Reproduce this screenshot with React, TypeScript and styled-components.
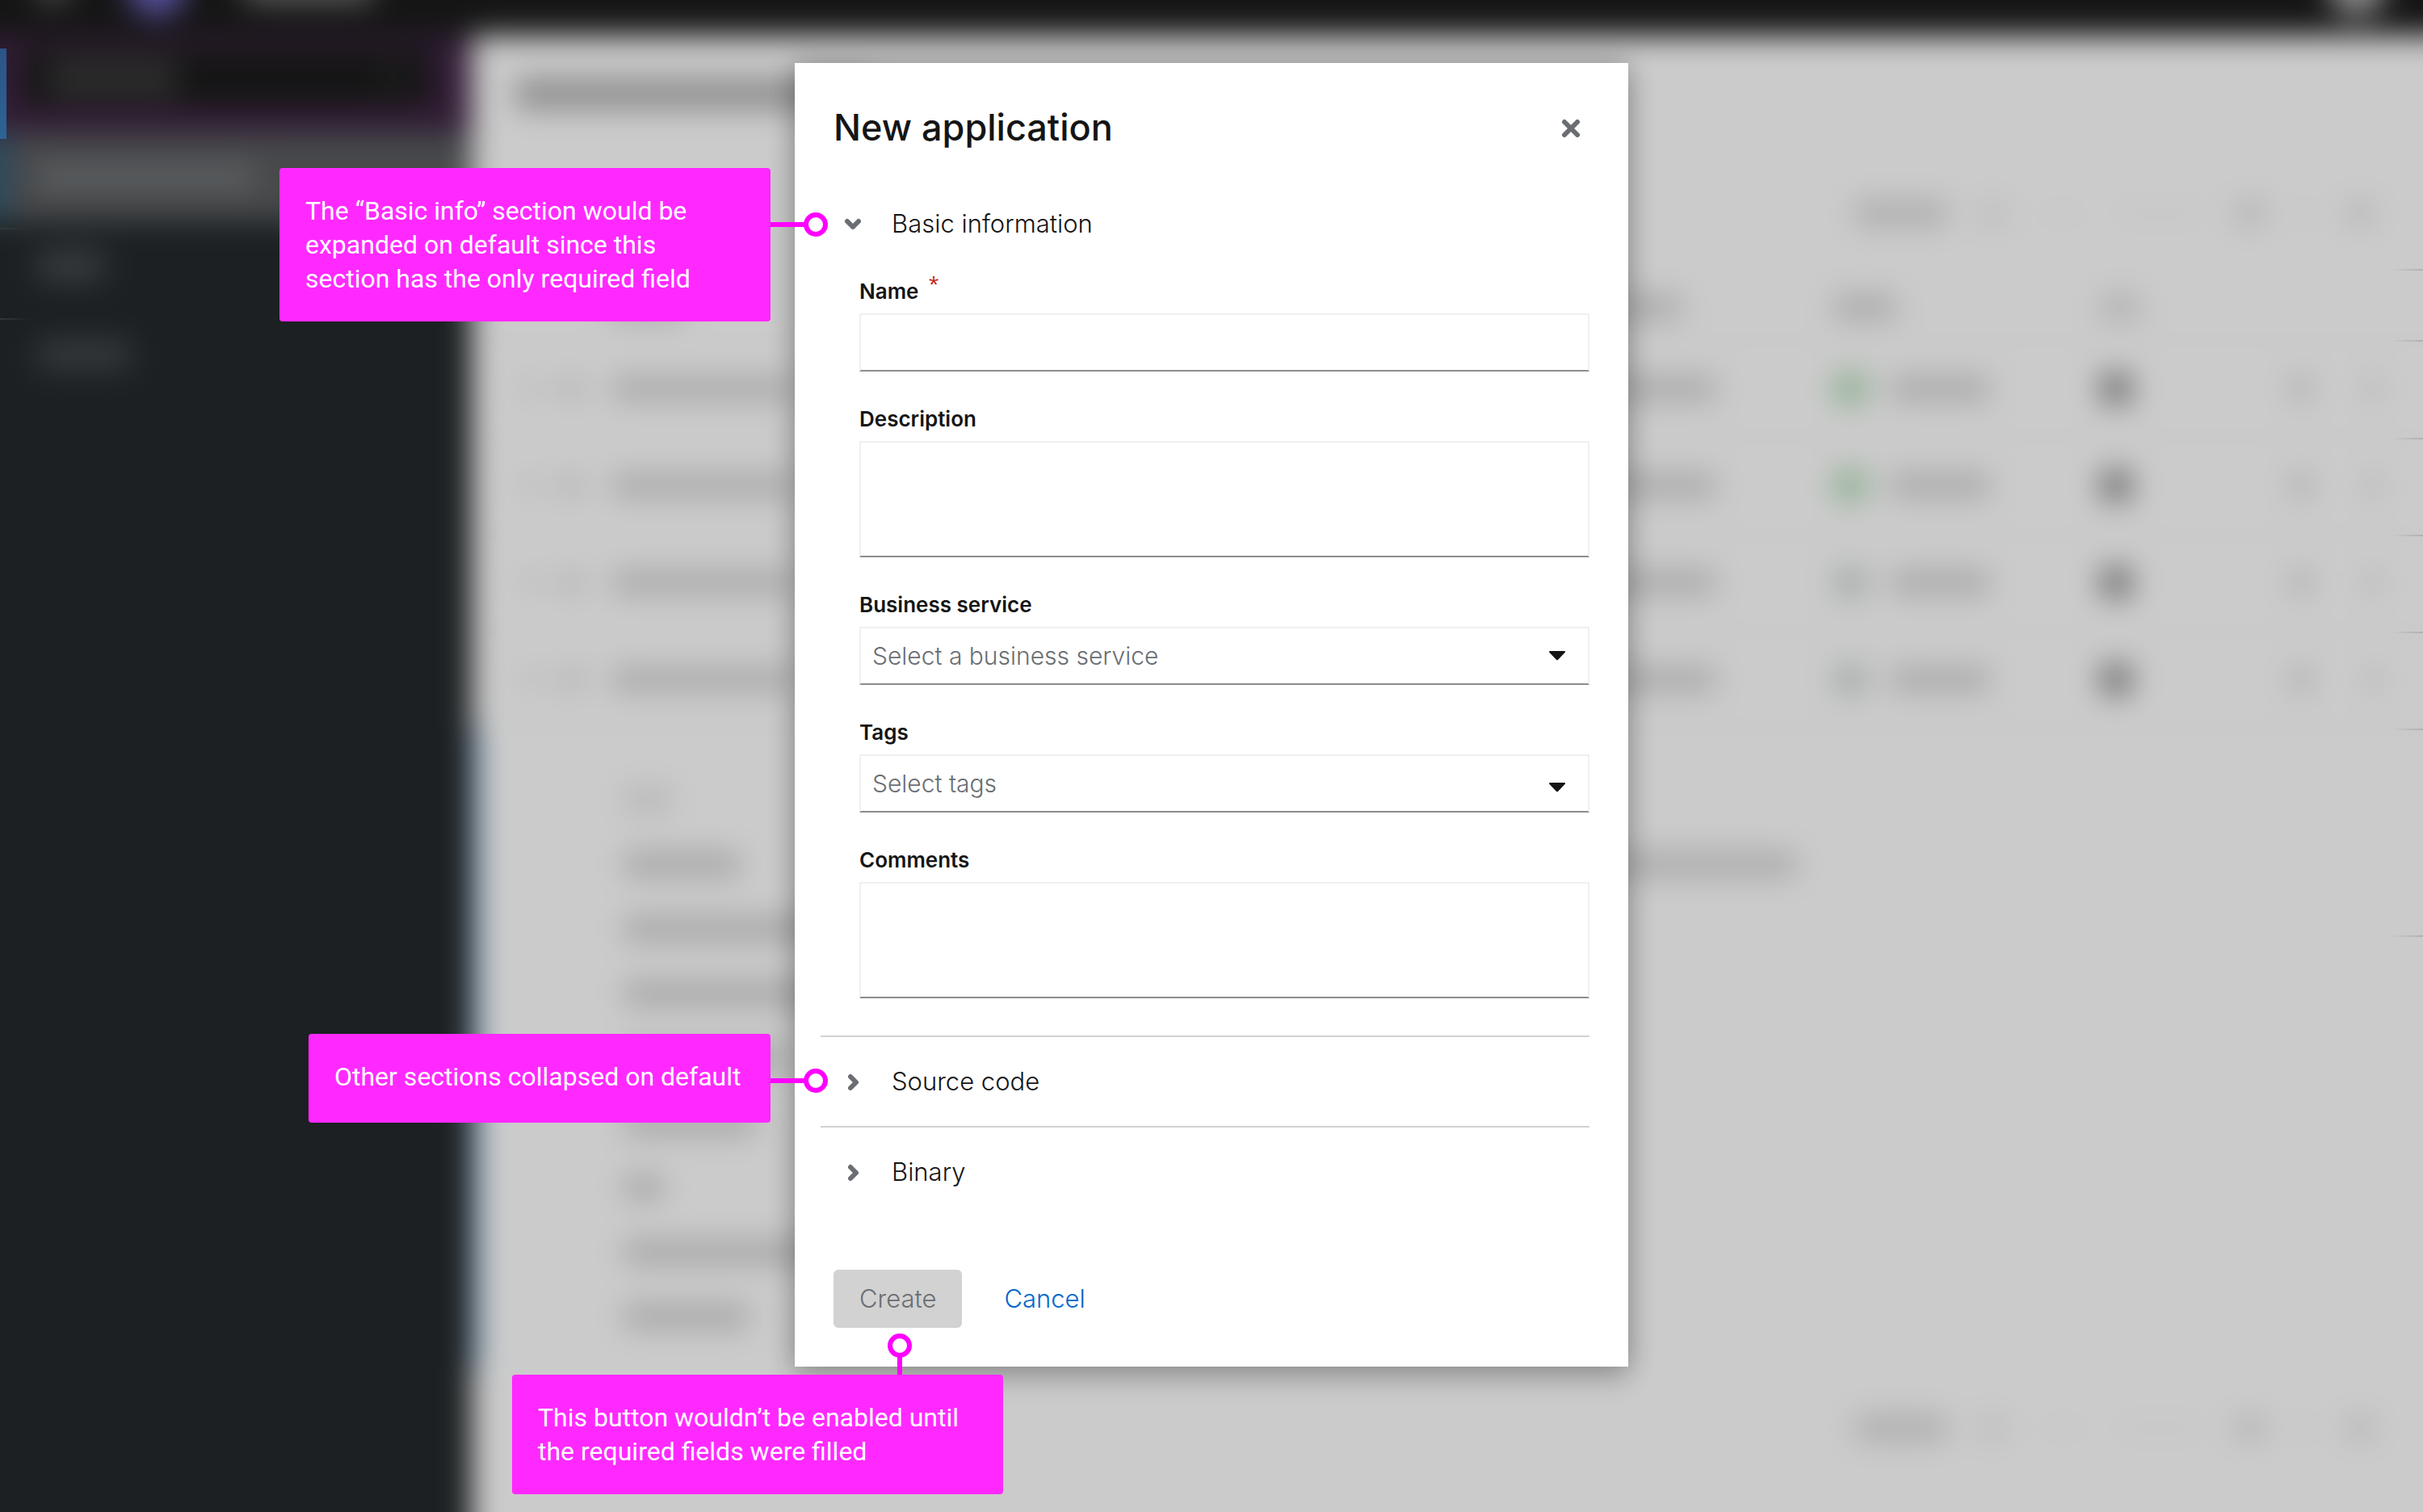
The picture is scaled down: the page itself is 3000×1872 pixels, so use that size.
import React from "react";
import styled, { createGlobalStyle, css } from "styled-components";

const bodyFont = `Inter, "Open Sans", sans-serif`;
const noteFont = `Roboto, "Open Sans", sans-serif`;

const color = {
  text: "#151515",
  muted: "#6a6e73",
  line: "#d2d2d2",
  fieldLine: "#f0f0f0",
  fieldBase: "#8a8d90",
  link: "#0066cc",
  required: "#c9190b",
  note: "#ff29ff",
  pin: "#ff00ff",
  page: "#cbcbcb",
  masthead: "#151515",
  sidebar: "#1c2022",
};

const GlobalStyle = createGlobalStyle`
  *, *::before, *::after { box-sizing: border-box; }
  body { margin: 0; background: ${color.page}; font-family: ${bodyFont}; color: ${color.text}; }
  button, input, select, textarea { font: inherit; color: inherit; }
`;

const Screen = styled.div`
  position: relative;
  min-height: 100vh;
  overflow: hidden;
`;

/* ---------- page behind the dialog ---------- */

const Backdrop = styled.div`
  position: absolute;
  inset: -104px -64px -64px;
  display: flex;
  flex-direction: column;
  background: ${color.page};
  filter: blur(18px);
`;

const Masthead = styled.div`
  flex: none;
  display: flex;
  align-items: center;
  gap: 72px;
  height: 148px;
  padding: 28px 110px 0;
  background: ${color.masthead};
`;

const Spacer = styled.div`
  flex: 1;
`;

const Disc = styled.div<{ $tone: string }>`
  width: 72px;
  height: 72px;
  border-radius: 50%;
  background: ${(p) => p.$tone};
`;

const Smudge = styled.div<{ $w: number; $h?: number; $tone?: string }>`
  flex: none;
  width: ${(p) => p.$w}px;
  height: ${(p) => p.$h ?? 32}px;
  border-radius: 8px;
  background: ${(p) => p.$tone ?? "#ababab"};
`;

const Shell = styled.div`
  flex: 1;
  display: flex;
  min-height: 0;
`;

const Sidebar = styled.div`
  flex: none;
  width: 648px;
  background: ${color.sidebar};
`;

const Perspective = styled.div`
  display: flex;
  height: 120px;
  padding: 16px 50px 32px 92px;
  background: #321d36;
`;

const PerspectiveBox = styled.div`
  flex: 1;
  display: flex;
  align-items: center;
  justify-content: space-between;
  padding: 0 32px;
  background: ${color.masthead};
`;

const NavItem = styled.div<{ $current?: boolean }>`
  display: flex;
  align-items: center;
  height: 110px;
  padding-left: 110px;
  ${(p) =>
    p.$current &&
    css`
      background: #47494b;
      border-left: 76px solid #2b4a5e;
      padding-left: 34px;
    `}
`;

const Main = styled.div`
  flex: 1;
  display: flex;
  flex-direction: column;
`;

const TitleRow = styled.div`
  display: flex;
  align-items: center;
  height: 144px;
  padding-left: 54px;
`;

const ToolbarRow = styled.div`
  display: flex;
  align-items: center;
  justify-content: flex-end;
  gap: 40px;
  height: 152px;
  padding-right: 124px;
`;

const TableRow = styled.div<{ $head?: boolean }>`
  display: grid;
  grid-template-columns: 44px 65px 1fr 270px 330px 235px 95px 134px;
  align-items: center;
  height: ${(p) => (p.$head ? 82 : 120)}px;
  padding-left: 64px;
  border-bottom: 2px solid #bebebe;
`;

const Pair = styled.div`
  display: flex;
  align-items: center;
  gap: 28px;
`;

const Expanded = styled.div`
  display: flex;
  height: 790px;
  padding: 72px 0 0 178px;
  border-left: 10px solid #6f9cc0;
`;

const DetailList = styled.div`
  flex: 1;
  display: flex;
  flex-direction: column;
  gap: 48px;
`;

const DetailValue = styled.div`
  width: 1064px;
  padding-top: 80px;
`;

const EdgeMark = styled.div<{ $side: "left" | "right"; $top: number }>`
  position: absolute;
  top: ${(p) => p.$top}px;
  ${(p) => p.$side}: 0;
  width: 40px;
  height: 2px;
  background: linear-gradient(
    to ${(p) => p.$side},
    transparent,
    ${(p) => (p.$side === "left" ? "#34383b" : "#b0b0b0")}
  );
`;

const EdgeBar = styled.div`
  position: absolute;
  top: 60px;
  left: 0;
  width: 8px;
  height: 112px;
  background: linear-gradient(#2c5488, #2d6396);
`;

const rows = ["#92b194", "#92b194", "#a9adad", "#a9adad"];
const details = [60, 145, 300, 300, 200, 165, 50, 300, 155];
const edgeLines = [333, 421, 542, 662, 782, 902, 1158];

function Pager() {
  return (
    <ToolbarRow>
      <Smudge $w={116} $tone="#aeaeae" />
      <Smudge $w={30} $tone="#bcbcbc" />
      <Smudge $w={60} $h={4} $tone="#bebebe" />
      <Smudge $w={106} $h={4} $tone="#b8b8b8" />
      <Smudge $w={36} $tone="#b4b4b4" />
      <Smudge $w={20} $h={8} $tone="#bcbcbc" />
      <Smudge $w={36} $tone="#b8b8b8" />
    </ToolbarRow>
  );
}

function PageBehind() {
  return (
    <Backdrop aria-hidden="true">
      <Masthead>
        <Smudge $w={40} $h={40} $tone="#4a4a4a" />
        <Disc $tone="#5752a0" />
        <Smudge $w={160} $h={40} $tone="#5c5c5c" />
        <Spacer />
        <Disc $tone="#8c8c8c" />
      </Masthead>
      <Shell>
        <Sidebar>
          <Perspective>
            <PerspectiveBox>
              <Smudge $w={160} $h={48} $tone="#2c2c2c" />
              <Smudge $w={32} $h={32} $tone="#1e1e1e" />
            </PerspectiveBox>
          </Perspective>
          <NavItem $current>
            <Smudge $w={270} $h={32} $tone="#5c5f61" />
          </NavItem>
          <NavItem>
            <Smudge $w={84} $h={40} $tone="#383b3d" />
          </NavItem>
          <NavItem>
            <Smudge $w={116} $h={40} $tone="#35383a" />
          </NavItem>
        </Sidebar>
        <Main>
          <TitleRow>
            <Smudge $w={440} $h={40} $tone="#909090" />
          </TitleRow>
          <Pager />
          <TableRow $head>
            <span />
            <span />
            <Smudge $w={90} />
            <Smudge $w={82} />
            <Smudge $w={78} />
            <Smudge $w={50} $tone="#b2b2b2" />
            <span />
            <span />
          </TableRow>
          {rows.map((tone, i) => (
            <TableRow key={i}>
              <Smudge $w={16} $tone="#b4b4b4" />
              <Smudge $w={30} $tone="#b4b4b4" />
              <Smudge $w={225} />
              <Smudge $w={125} />
              <Pair>
                <Smudge $w={42} $h={40} $tone={tone} />
                <Smudge $w={124} />
              </Pair>
              <Smudge $w={40} $h={40} $tone="#767676" />
              <Smudge $w={28} $tone="#b0b0b0" />
              <Smudge $w={16} $tone="#b0b0b0" />
            </TableRow>
          ))}
          <Expanded>
            <DetailList>
              {details.map((w, i) => (
                <Smudge key={i} $w={w} $tone={i === 0 ? "#b8b8b8" : "#a8a8a8"} />
              ))}
            </DetailList>
            <DetailValue>
              <Smudge $w={224} />
            </DetailValue>
          </Expanded>
          <Pager />
        </Main>
      </Shell>
    </Backdrop>
  );
}

/* ---------- dialog ---------- */

const ModalLayer = styled.div`
  position: relative;
  display: flex;
  justify-content: center;
  padding: 78px 0;
`;

const Dialog = styled.form`
  width: 1032px;
  max-width: 100%;
  padding: 48px;
  background: #fff;
  box-shadow: 0 16px 32px rgba(3, 3, 3, 0.16), 0 0 32px rgba(3, 3, 3, 0.24);
`;

const DialogHeader = styled.header`
  display: flex;
  align-items: center;
  justify-content: space-between;
`;

const Title = styled.h1`
  margin: 0;
  font: 500 45px/64px ${bodyFont};
`;

const IconButton = styled.button`
  display: flex;
  padding: 12px;
  border: 0;
  background: none;
  color: ${color.muted};
`;

const Sections = styled.div`
  margin: 32px 0 66px -16px;
`;

const Section = styled.section`
  & + & {
    border-top: 2px solid ${color.line};
  }
`;

const SectionHeading = styled.h2`
  position: relative;
  margin: 0;
  font: 300 31px/48px ${bodyFont};
`;

const Toggle = styled.button`
  display: flex;
  align-items: center;
  gap: 34px;
  width: 100%;
  height: 110px;
  padding: 0 0 0 28px;
  border: 0;
  background: none;
  text-align: left;
`;

const Icon = styled.svg`
  flex: none;
  display: block;
  fill: none;
  stroke: ${color.muted};
  stroke-width: 6;
  stroke-linecap: round;
  stroke-linejoin: round;
`;

const Fields = styled.div`
  display: flex;
  flex-direction: column;
  gap: 40px;
  padding: 10px 0 46px 48px;
`;

const Field = styled.div`
  display: flex;
  flex-direction: column;
  gap: 8px;
`;

const Label = styled.label`
  font: 600 26px/38px ${bodyFont};
`;

const Required = styled.sup`
  margin-left: 12px;
  font: 400 24px/1px "Open Sans", sans-serif;
  color: ${color.required};
`;

const control = css`
  display: block;
  width: 100%;
  margin: 0;
  border: 2px solid ${color.fieldLine};
  border-bottom-color: ${color.fieldBase};
  border-radius: 0;
  background: #fff;
  outline: 0;
  font: 300 30px/48px ${bodyFont};
`;

const TextInput = styled.input`
  ${control}
  height: 72px;
  padding: 0 16px;
`;

const TextArea = styled.textarea`
  ${control}
  height: 144px;
  padding: 10px 16px;
  resize: none;
`;

const SelectBox = styled.div`
  display: grid;
  align-items: center;
  & > * {
    grid-area: 1 / 1;
  }
`;

const Select = styled.select`
  ${control}
  height: 72px;
  padding: 0 64px 0 14px;
  appearance: none;
  color: ${color.muted};
`;

const Caret = styled.svg<{ $typeahead?: boolean }>`
  justify-self: end;
  margin: ${(p) => (p.$typeahead ? "10px" : "0")} 30px 0 0;
  fill: ${color.text};
  pointer-events: none;
`;

const Footer = styled.footer`
  display: flex;
  gap: 20px;
`;

const Action = styled.button<{ $link?: boolean }>`
  height: 72px;
  padding: 0 32px;
  border: 0;
  border-radius: 6px;
  background: ${(p) => (p.$link ? "none" : color.line)};
  color: ${(p) => (p.$link ? color.link : color.muted)};
  font: 300 31px/48px ${bodyFont};
`;

const ActionAnchor = styled.div`
  position: relative;
  display: flex;
`;

/* ---------- annotations laid over the dialog ---------- */

const Callout = styled.aside<{ $at: "first" | "second" | "below" }>`
  position: absolute;
  min-height: 110px;
  padding: 32px;
  border-radius: 4px;
  background: ${color.note};
  color: #fff;
  font: 400 32px/42px ${noteFont};
  white-space: pre-line;
  ${(p) => p.$at === "first" && css`width: 608px; top: -14px; right: calc(100% + 62px);`}
  ${(p) => p.$at === "second" && css`width: 572px; top: -4px; right: calc(100% + 62px);`}
  ${(p) => p.$at === "below" && css`width: 608px; top: calc(100% + 58px); left: -398px;`}

  /* connector */
  &::before {
    content: "";
    position: absolute;
    background: ${color.pin};
    ${(p) =>
      p.$at === "below"
        ? css`left: 477px; bottom: 100%; width: 6px; height: 24px;`
        : css`left: 100%; top: ${p.$at === "first" ? 67 : 55}px; width: 44px; height: 6px;`}
  }

  /* pin */
  &::after {
    content: "";
    position: absolute;
    width: 30px;
    height: 30px;
    border: 6px solid ${color.pin};
    border-radius: 50%;
    background: #fff;
    ${(p) =>
      p.$at === "below"
        ? css`left: 465px; bottom: calc(100% + 21px);`
        : css`left: calc(100% + 41px); top: ${p.$at === "first" ? 55 : 43}px;`}
  }
`;

function Chevron({ open }: { open?: boolean }) {
  return (
    <Icon width="26" height="26" viewBox="0 0 26 26" aria-hidden="true">
      <path d={open ? "M5 10l7 7 7-7" : "M9 7l7 7-7 7"} />
    </Icon>
  );
}

interface SectionProps {
  title: string;
  open?: boolean;
  note?: React.ReactNode;
  children?: React.ReactNode;
}

function FormSection({ title, open, note, children }: SectionProps) {
  return (
    <Section>
      <SectionHeading>
        <Toggle type="button" aria-expanded={!!open}>
          <Chevron open={open} />
          {title}
        </Toggle>
        {note}
      </SectionHeading>
      {children && <Fields>{children}</Fields>}
    </Section>
  );
}

interface SelectFieldProps {
  id: string;
  label: string;
  placeholder: string;
  typeahead?: boolean;
}

function SelectField({ id, label, placeholder, typeahead }: SelectFieldProps) {
  return (
    <Field>
      <Label htmlFor={id}>{label}</Label>
      <SelectBox>
        <Select id={id} defaultValue="">
          <option value="">{placeholder}</option>
        </Select>
        <Caret $typeahead={typeahead} width="20" height="12" viewBox="0 0 20 12" aria-hidden="true">
          <path d="M1 0h18c1 0 1.300 1 .7 1.700l-8.600 9c-.7.700-1.500.700-2.200 0L.3 1.700C-.3 1 0 0 1 0z" />
        </Caret>
      </SelectBox>
    </Field>
  );
}

export default function App() {
  return (
    <Screen>
      <GlobalStyle />
      <PageBehind />
      <EdgeBar />
      <EdgeMark $side="left" $top={282} />
      <EdgeMark $side="left" $top={394} />
      {edgeLines.map((y) => (
        <EdgeMark key={y} $side="right" $top={y} />
      ))}
      <ModalLayer>
        <Dialog role="dialog" aria-labelledby="dialog-title" onSubmit={(e) => e.preventDefault()}>
          <DialogHeader>
            <Title id="dialog-title">New application</Title>
            <IconButton type="button" aria-label="Close">
              <Icon width="24" height="24" viewBox="0 0 24 24" aria-hidden="true">
                <path d="M5 5l16 16M21 5L5 21" />
              </Icon>
            </IconButton>
          </DialogHeader>
          <Sections>
            <FormSection
              title="Basic information"
              open
              note={
                <Callout $at="first">
                  {"The “Basic info” section would be\nexpanded on default since this\nsection has the only required field"}
                </Callout>
              }
            >
              <Field>
                <Label htmlFor="name">
                  Name<Required>*</Required>
                </Label>
                <TextInput id="name" type="text" required />
              </Field>
              <Field>
                <Label htmlFor="description">Description</Label>
                <TextArea id="description" />
              </Field>
              <SelectField id="service" label="Business service" placeholder="Select a business service" />
              <SelectField id="tags" label="Tags" placeholder="Select tags" typeahead />
              <Field>
                <Label htmlFor="comments">Comments</Label>
                <TextArea id="comments" />
              </Field>
            </FormSection>
            <FormSection
              title="Source code"
              note={<Callout $at="second">Other sections collapsed on default</Callout>}
            />
            <FormSection title="Binary" />
          </Sections>
          <Footer>
            <ActionAnchor>
              <Action type="submit" disabled>
                Create
              </Action>
              <Callout $at="below">{"This button wouldn’t be enabled until\nthe required fields were filled"}</Callout>
            </ActionAnchor>
            <Action type="button" $link>
              Cancel
            </Action>
          </Footer>
        </Dialog>
      </ModalLayer>
    </Screen>
  );
}
